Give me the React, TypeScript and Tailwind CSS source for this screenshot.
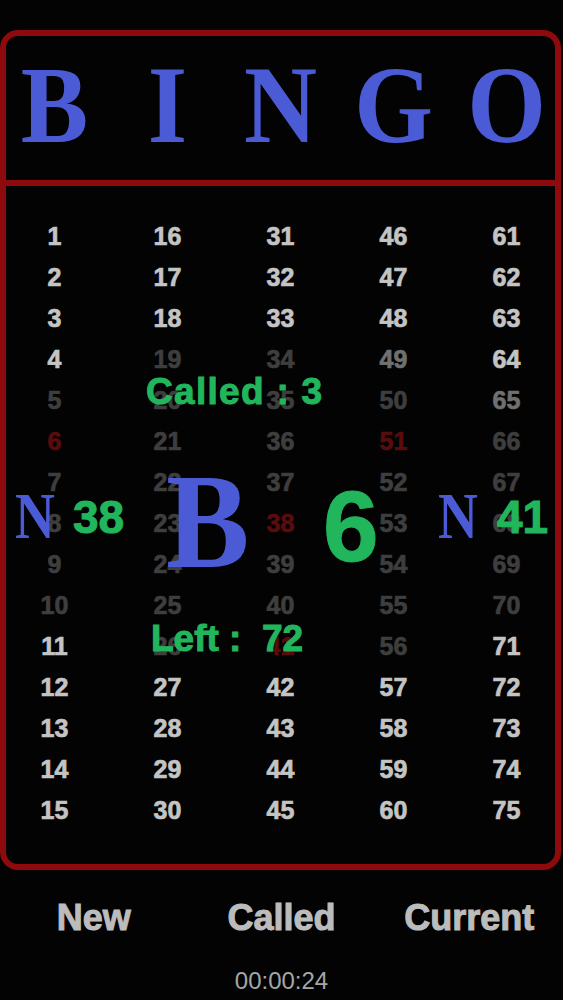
import React from "react";

type Tone = "b" | "d" | "m" | "r";

const toneClass: Record<Tone, string> = {
  b: "text-[#c4c4c4]",
  d: "text-[#3e3e3e]",
  m: "text-[#707070]",
  r: "text-[#5a0c0c]",
};

const tones: Tone[][] = [
  ["b", "b", "b", "b", "b"],
  ["b", "b", "b", "b", "b"],
  ["b", "b", "b", "b", "b"],
  ["b", "d", "d", "m", "b"],
  ["d", "d", "d", "d", "m"],
  ["r", "d", "d", "r", "d"],
  ["d", "d", "d", "d", "d"],
  ["d", "d", "r", "d", "d"],
  ["d", "d", "d", "d", "d"],
  ["d", "d", "d", "d", "d"],
  ["b", "d", "r", "d", "b"],
  ["b", "b", "b", "b", "b"],
  ["b", "b", "b", "b", "b"],
  ["b", "b", "b", "b", "b"],
  ["b", "b", "b", "b", "b"],
];

const sans = "font-['Liberation_Sans',Arial,sans-serif]";
const serif = "font-['Liberation_Serif','Times_New_Roman',serif]";
const heavy = "[-webkit-text-stroke:0.7px_currentColor]";
const heavier = "[-webkit-text-stroke:1px_currentColor]";

export default function App() {
  const rows = Array.from({ length: 15 }, (_, r) => r);
  return (
    <div className={`min-h-[1000px] w-[563px] bg-[#030303] pt-[30px] ${sans}`}>
      <div className="w-[561px] h-[840px] rounded-[18px] border-[6px] border-[#8e0a0c] overflow-hidden flex flex-col">
        <div className="h-[150px] border-b-[6px] border-[#8e0a0c] -mx-[8px] grid grid-cols-5 pt-[14px]">
          {["B", "I", "N", "G", "O"].map((l) => (
            <div
              key={l}
              className={`${serif} text-center font-bold text-[110px] leading-none text-[#4b5bd6] scale-x-[0.92]`}
            >
              {l}
            </div>
          ))}
        </div>
        <div className="relative flex-1">
          <div className="-mx-[8px] pt-[30px] grid grid-cols-5">
            {rows.map((r) =>
              [0, 1, 2, 3, 4].map((c) => (
                <div
                  key={`${r}-${c}`}
                  className={`h-[41px] leading-[41px] text-center font-bold text-[25px] ${heavy} ${toneClass[tones[r][c]]}`}
                >
                  {c * 15 + r + 1}
                </div>
              ))
            )}
          </div>

          <div className={`absolute left-[140px] top-[187px] text-[37px] leading-none font-bold tracking-[1.3px] ${heavier} text-[#22b65c] whitespace-pre`}>
            Called : 3
          </div>
          <div className={`absolute left-[145px] top-[434px] text-[37px] leading-none font-bold ${heavier} text-[#22b65c] whitespace-pre`}>
            {"Left :  72"}
          </div>

          <div className={`absolute left-[160px] top-[267px] ${serif} font-bold text-[136px] leading-none text-[#4b5bd6] scale-x-[0.92] origin-left`}>
            B
          </div>
          <div className={`absolute left-[317px] top-[290px] font-bold text-[100px] leading-none ${heavier} text-[#22b65c]`}>
            6
          </div>

          <div className={`absolute left-[9px] top-[298px] ${serif} font-bold text-[65px] leading-none text-[#4b5bd6] scale-x-[0.85] origin-left`}>
            N
          </div>
          <div className={`absolute left-[67px] top-[308px] font-bold text-[46px] leading-none ${heavier} text-[#22b65c]`}>
            38
          </div>

          <div className={`absolute left-[432px] top-[298px] ${serif} font-bold text-[65px] leading-none text-[#4b5bd6] scale-x-[0.85] origin-left`}>
            N
          </div>
          <div className={`absolute left-[491px] top-[308px] font-bold text-[46px] leading-none ${heavier} text-[#22b65c]`}>
            41
          </div>
        </div>
      </div>

      <div className="mt-[30px] grid grid-cols-3">
        {["New", "Called", "Current"].map((t) => (
          <div key={t} className={`text-center font-bold text-[36px] leading-none ${heavier} text-[#bcbcbc]`}>
            {t}
          </div>
        ))}
      </div>
      <div className="mt-[33px] text-center text-[24px] leading-none text-[#a6a6a6]">00:00:24</div>
    </div>
  );
}
